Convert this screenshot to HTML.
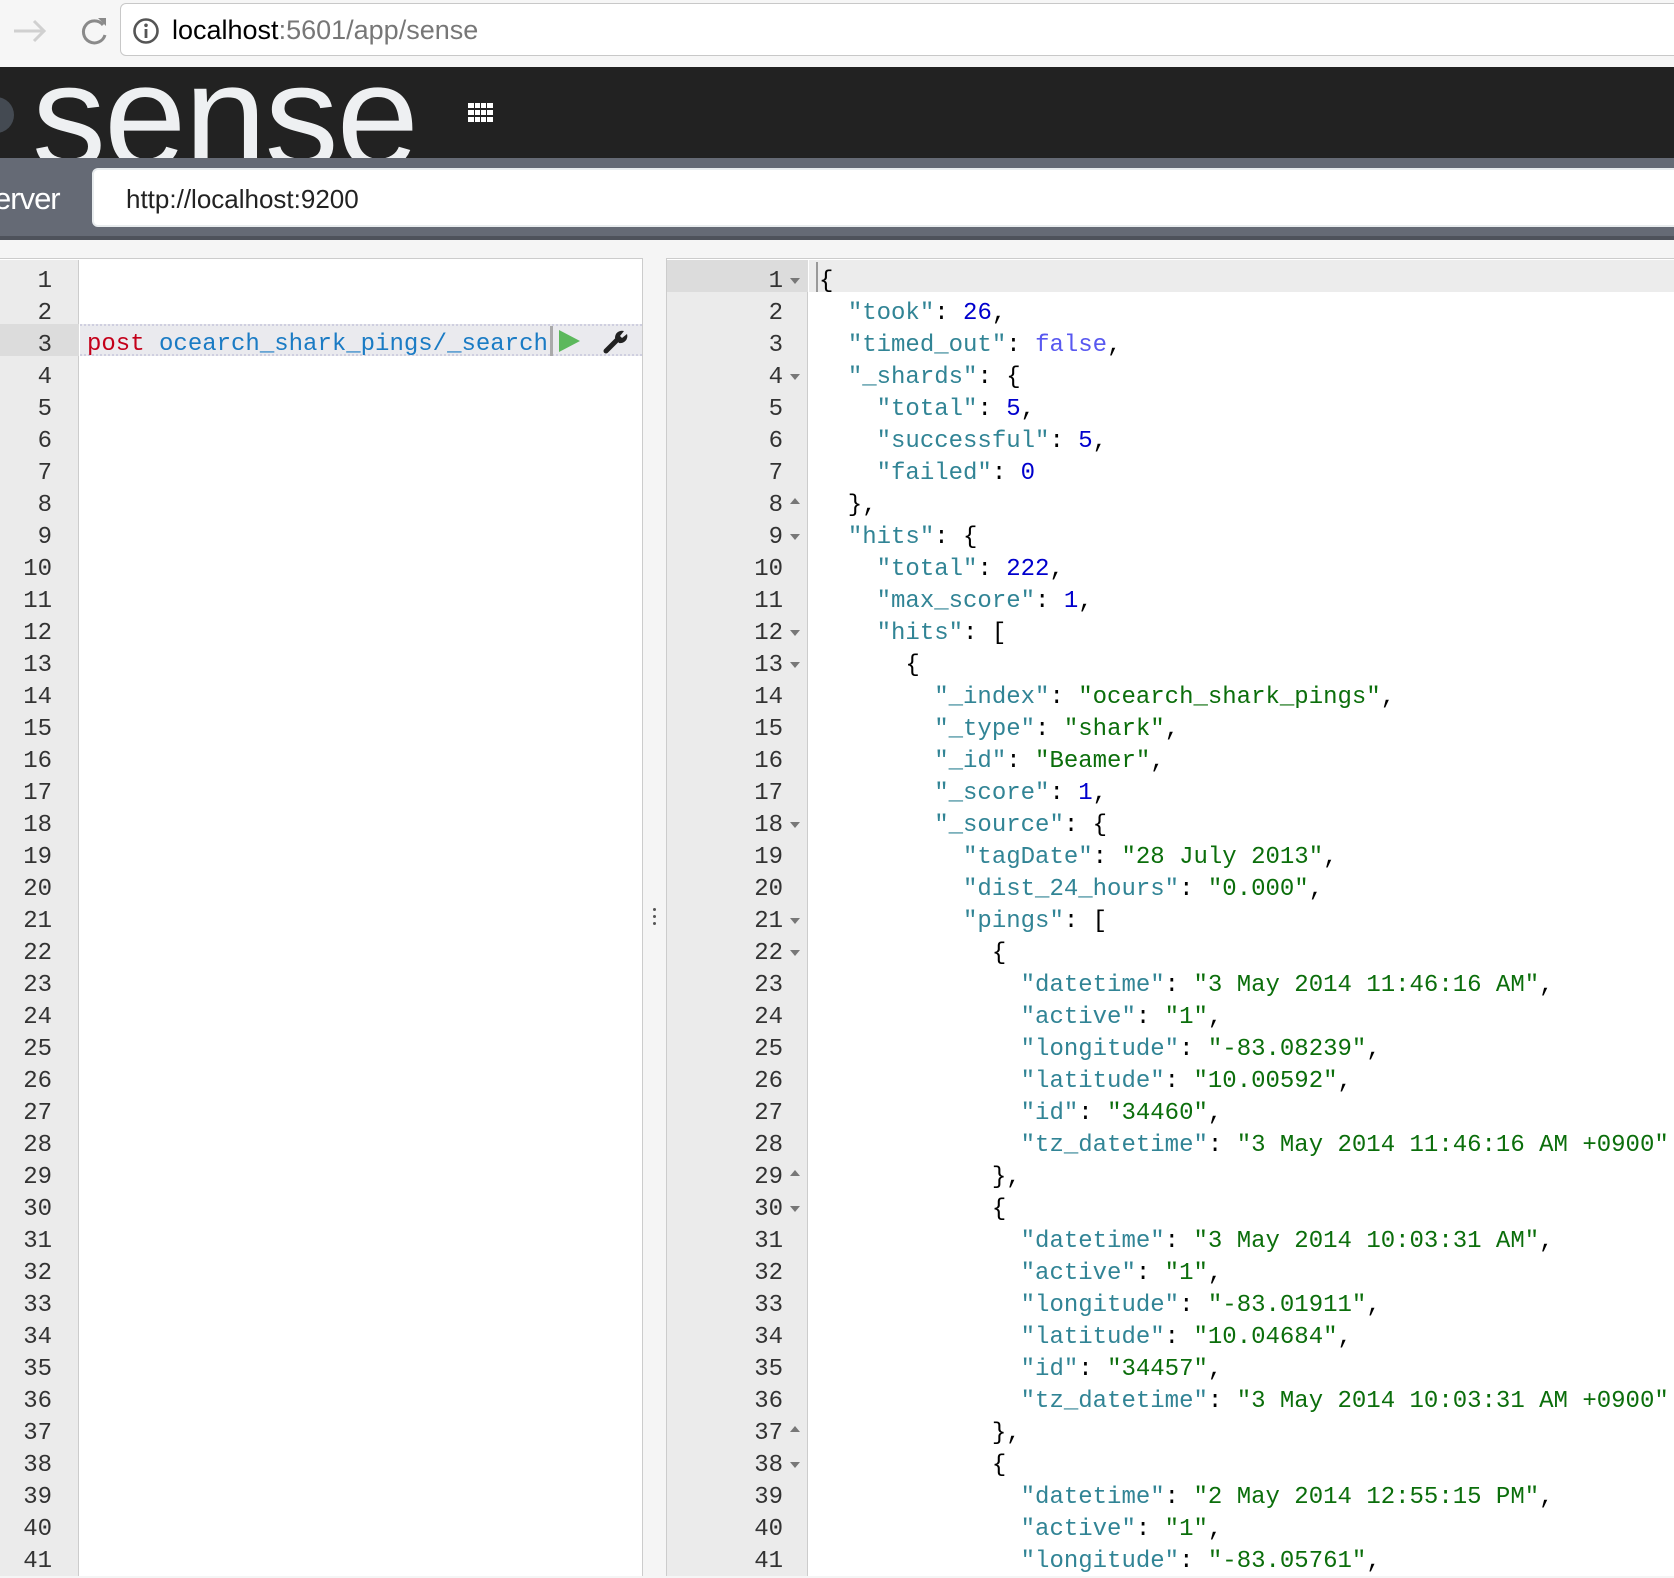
<!DOCTYPE html>
<html><head><meta charset="utf-8">
<style>
*{margin:0;padding:0;box-sizing:border-box}
html,body{width:1674px;height:1576px;overflow:hidden;background:#f5f5f5;font-family:"Liberation Sans",Arial,sans-serif}
.abs{position:absolute}
.mono{font-family:"Liberation Mono","DejaVu Sans Mono",monospace;font-size:24px;white-space:pre;line-height:32px}
.k{color:#318495}.s{color:#0b6e0b}.n{color:#0000cd}.b{color:#5858f0}.p{color:#000}
.fold{position:absolute;width:0;height:0;border-left:5px solid transparent;border-right:5px solid transparent}
.fd{border-top:6px solid #777}.fu{border-bottom:6px solid #777}
</style></head><body>
<div class="abs" style="left:0;top:0;width:1674px;height:67px;background:#f6f6f6"></div>
<svg class="abs" style="left:10px;top:14px" width="100" height="34" viewBox="0 0 100 34">
<path d="M4 17H34M24 7L34 17L24 27" stroke="#d0d0d0" stroke-width="3" fill="none"/>
<path d="M93 11A11 11 0 1 0 95 21" stroke="#8a8a8a" stroke-width="3" fill="none"/>
<path d="M88 4L96 4L96 12Z" fill="#8a8a8a"/>
</svg>
<div class="abs" style="left:120px;top:3px;width:1580px;height:53px;background:#fff;border:1px solid #c8c8c8;border-radius:6px"></div>
<svg class="abs" style="left:132px;top:17px" width="28" height="28" viewBox="0 0 28 28"><circle cx="14" cy="14" r="11.5" stroke="#555" stroke-width="2.6" fill="none"/><rect x="12.6" y="12" width="2.8" height="9" fill="#555"/><circle cx="14" cy="8.3" r="1.8" fill="#555"/></svg>
<div class="abs" style="left:172px;top:15px;font-size:27px;color:#000;white-space:pre">localhost<span style="color:#777">:5601/app/sense</span></div>
<div class="abs" style="left:0;top:67px;width:1674px;height:91px;background:#222;overflow:hidden">
<div class="abs" style="left:-22px;top:30px;width:36px;height:36px;border-radius:50%;background:#444a52"></div>
<div class="abs" style="left:32px;top:-50px;font-size:148px;color:#eef0f2;line-height:200px;letter-spacing:-2px">sense</div>
</div>
<svg class="abs" style="left:468px;top:103px" width="25" height="19" viewBox="0 0 25 19" fill="#fff">
<rect x="0" y="0" width="6" height="5"/><rect x="7" y="0" width="5" height="5"/><rect x="13" y="0" width="5" height="5"/><rect x="19" y="0" width="6" height="5"/>
<rect x="0" y="7" width="6" height="5"/><rect x="7" y="7" width="5" height="5"/><rect x="13" y="7" width="5" height="5"/><rect x="19" y="7" width="6" height="5"/>
<rect x="0" y="14" width="6" height="5"/><rect x="7" y="14" width="5" height="5"/><rect x="13" y="14" width="5" height="5"/><rect x="19" y="14" width="6" height="5"/>
</svg>
<div class="abs" style="left:0;top:158px;width:1674px;height:82px;background:#656a75;border-bottom:4px solid #4e525b"></div>
<div class="abs" style="left:-6px;top:181px;font-size:31px;color:#fff;letter-spacing:-1px">erver</div>
<div class="abs" style="left:92px;top:168px;width:1600px;height:59px;background:#fff;border-radius:6px;border:2px solid #e8ecee"></div>
<div class="abs" style="left:126px;top:184px;font-size:26px;color:#222">http://localhost:9200</div>
<div class="abs" style="left:0;top:258px;width:643px;height:1318px;background:#fff;border:1px solid #ccc;border-left:none;border-bottom:none"></div>
<div class="abs" style="left:0;top:260px;width:79px;height:1316px;background:#ebebeb;border-right:1px solid #ccc"></div>
<div class="abs" style="left:0;top:324px;width:79px;height:32px;background:#dcdcdc"></div>
<div class="abs" style="left:80px;top:324px;width:562px;height:32px;background:#eaeaee;border-top:2px dotted #cfcfe0;border-bottom:2px dotted #cfcfe0"></div>
<div class="abs mono" id="lg" style="left:0;top:266px;width:52px;color:#333;text-align:right"></div>
<div class="abs mono" style="left:87px;top:329px"><span style="color:#c4001a">post</span> <span style="color:#1a7bc4">ocearch_shark_pings/_search</span></div>
<div class="abs" style="left:550px;top:326px;width:3px;height:30px;background:#aaa"></div>
<svg class="abs" style="left:559px;top:330px" width="22" height="22"><path d="M0 0L21 11L0 22Z" fill="#5cb85c"/></svg>
<svg class="abs" style="left:603px;top:329px" width="26" height="26" viewBox="0 0 26 26"><path d="M3 22L14 11" stroke="#222" stroke-width="5" stroke-linecap="round"/><path d="M12 9A7 7 0 0 1 21 2L17 7L19 9L24 5A7 7 0 0 1 16 14Z" fill="#222"/></svg>
<div class="abs" style="left:653px;top:908px;width:3px;height:3px;background:#555;border-radius:50%;box-shadow:0 7px 0 #555,0 14px 0 #555"></div>
<div class="abs" style="left:666px;top:258px;width:1010px;height:1318px;background:#fff;border:1px solid #ccc;border-right:none;border-bottom:none"></div>
<div class="abs" style="left:667px;top:260px;width:141px;height:1316px;background:#ebebeb;border-right:1px solid #ccc"></div>
<div class="abs" style="left:667px;top:260px;width:141px;height:32px;background:#dcdcdc"></div>
<div class="abs" style="left:809px;top:260px;width:870px;height:32px;background:#ececec"></div>
<div class="abs" style="left:816px;top:262px;width:2px;height:30px;background:#999"></div>
<div class="abs mono" id="rg" style="left:667px;top:266px;width:116px;color:#333;text-align:right"></div>
<div class="abs mono" id="rc" style="left:819px;top:266px"></div>
<script>
var lg='';for(var i=1;i<=41;i++)lg+=i+'\n';document.getElementById('lg').textContent=lg;
document.getElementById('rg').textContent=lg;
function K(k){return '<span class="k">"'+k+'"</span>: '}
function S(v){return '<span class="s">"'+v+'"</span>'}
function N(v){return '<span class="n">'+v+'</span>'}
var sp=function(n){return ' '.repeat(n)};
var L=[
'{',
sp(2)+K('took')+N(26)+',',
sp(2)+K('timed_out')+'<span class="b">false</span>,',
sp(2)+K('_shards')+'{',
sp(4)+K('total')+N(5)+',',
sp(4)+K('successful')+N(5)+',',
sp(4)+K('failed')+N(0),
sp(2)+'},',
sp(2)+K('hits')+'{',
sp(4)+K('total')+N(222)+',',
sp(4)+K('max_score')+N(1)+',',
sp(4)+K('hits')+'[',
sp(6)+'{',
sp(8)+K('_index')+S('ocearch_shark_pings')+',',
sp(8)+K('_type')+S('shark')+',',
sp(8)+K('_id')+S('Beamer')+',',
sp(8)+K('_score')+N(1)+',',
sp(8)+K('_source')+'{',
sp(10)+K('tagDate')+S('28 July 2013')+',',
sp(10)+K('dist_24_hours')+S('0.000')+',',
sp(10)+K('pings')+'[',
sp(12)+'{',
sp(14)+K('datetime')+S('3 May 2014 11:46:16 AM')+',',
sp(14)+K('active')+S('1')+',',
sp(14)+K('longitude')+S('-83.08239')+',',
sp(14)+K('latitude')+S('10.00592')+',',
sp(14)+K('id')+S('34460')+',',
sp(14)+K('tz_datetime')+S('3 May 2014 11:46:16 AM +0900'),
sp(12)+'},',
sp(12)+'{',
sp(14)+K('datetime')+S('3 May 2014 10:03:31 AM')+',',
sp(14)+K('active')+S('1')+',',
sp(14)+K('longitude')+S('-83.01911')+',',
sp(14)+K('latitude')+S('10.04684')+',',
sp(14)+K('id')+S('34457')+',',
sp(14)+K('tz_datetime')+S('3 May 2014 10:03:31 AM +0900'),
sp(12)+'},',
sp(12)+'{',
sp(14)+K('datetime')+S('2 May 2014 12:55:15 PM')+',',
sp(14)+K('active')+S('1')+',',
sp(14)+K('longitude')+S('-83.05761')+','
];
document.getElementById('rc').innerHTML=L.join('\n');
var down=[1,4,9,12,13,18,21,22,30,38],up=[8,29,37],h='';
down.forEach(function(n){h+='<div class="fold fd" style="left:790px;top:'+(260+(n-1)*32+18)+'px"></div>'});
up.forEach(function(n){h+='<div class="fold fu" style="left:790px;top:'+(260+(n-1)*32+14)+'px"></div>'});
document.body.insertAdjacentHTML('beforeend',h);
</script>
</body></html>
